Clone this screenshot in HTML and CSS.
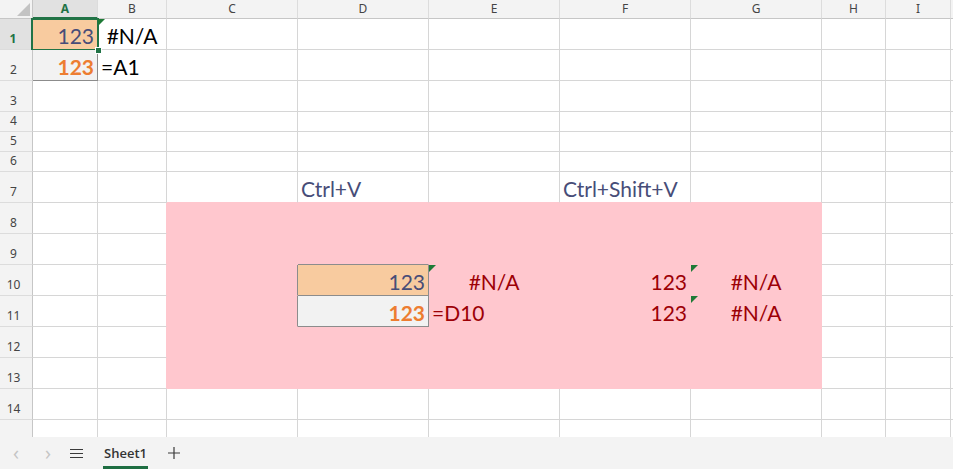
FILE: index.html
```html
<!DOCTYPE html>
<html>
<head>
<meta charset="utf-8">
<link rel="stylesheet" href="styles.css">
</head>
<body>
<div class="app">
  <div class="sheet">
    <!-- header row -->
    <div class="c corner"></div>
    <div class="c hd hd-sel">A</div>
    <div class="c hd">B</div>
    <div class="c hd">C</div>
    <div class="c hd">D</div>
    <div class="c hd">E</div>
    <div class="c hd">F</div>
    <div class="c hd">G</div>
    <div class="c hd">H</div>
    <div class="c hd">I</div>
    <div class="c hd"></div>
    <!-- row 1 -->
    <div class="c rh rh-sel">1</div>
    <div class="c num fill-peach txt-slate bx sel">123</div>
    <div class="c ctr tri">#N/A</div>
    <div class="c"></div><div class="c"></div><div class="c"></div><div class="c"></div><div class="c"></div><div class="c"></div><div class="c"></div><div class="c"></div>
    <!-- row 2 -->
    <div class="c rh">2</div>
    <div class="c num fill-grey txt-orange bx">123</div>
    <div class="c">=A1</div>
    <div class="c"></div><div class="c"></div><div class="c"></div><div class="c"></div><div class="c"></div><div class="c"></div><div class="c"></div><div class="c"></div>
    <!-- row 3 -->
    <div class="c rh">3</div>
    <div class="c"></div><div class="c"></div><div class="c"></div><div class="c"></div><div class="c"></div><div class="c"></div><div class="c"></div><div class="c"></div><div class="c"></div><div class="c"></div>
    <!-- row 4 -->
    <div class="c rh">4</div>
    <div class="c"></div><div class="c"></div><div class="c"></div><div class="c"></div><div class="c"></div><div class="c"></div><div class="c"></div><div class="c"></div><div class="c"></div><div class="c"></div>
    <!-- row 5 -->
    <div class="c rh">5</div>
    <div class="c"></div><div class="c"></div><div class="c"></div><div class="c"></div><div class="c"></div><div class="c"></div><div class="c"></div><div class="c"></div><div class="c"></div><div class="c"></div>
    <!-- row 6 -->
    <div class="c rh">6</div>
    <div class="c"></div><div class="c"></div><div class="c"></div><div class="c"></div><div class="c"></div><div class="c"></div><div class="c"></div><div class="c"></div><div class="c"></div><div class="c"></div>
    <!-- row 7 -->
    <div class="c rh">7</div>
    <div class="c"></div><div class="c"></div>
    <div class="c bb-pink"></div>
    <div class="c bb-pink txt-slate">Ctrl+V</div>
    <div class="c bb-pink"></div>
    <div class="c bb-pink txt-slate">Ctrl+Shift+V</div>
    <div class="c bb-pink"></div>
    <div class="c"></div><div class="c"></div><div class="c"></div>
    <!-- row 8 -->
    <div class="c rh">8</div>
    <div class="c"></div><div class="c br-pink"></div>
    <div class="c pk"></div><div class="c pk"></div><div class="c pk"></div><div class="c pk"></div><div class="c pk"></div>
    <div class="c"></div><div class="c"></div><div class="c"></div>
    <!-- row 9 -->
    <div class="c rh">9</div>
    <div class="c"></div><div class="c br-pink"></div>
    <div class="c pk"></div><div class="c pk bb-dark"></div><div class="c pk"></div><div class="c pk"></div><div class="c pk"></div>
    <div class="c"></div><div class="c"></div><div class="c"></div>
    <!-- row 10 -->
    <div class="c rh">10</div>
    <div class="c"></div><div class="c br-pink"></div>
    <div class="c pk br-dark"></div>
    <div class="c num fill-peach txt-slate bx">123</div>
    <div class="c pk ctr tri">#N/A</div>
    <div class="c pk num">123</div>
    <div class="c pk ctr tri">#N/A</div>
    <div class="c"></div><div class="c"></div><div class="c"></div>
    <!-- row 11 -->
    <div class="c rh">11</div>
    <div class="c"></div><div class="c br-pink"></div>
    <div class="c pk br-dark"></div>
    <div class="c num fill-grey txt-orange bx">123</div>
    <div class="c pk">=D10</div>
    <div class="c pk num">123</div>
    <div class="c pk ctr tri">#N/A</div>
    <div class="c"></div><div class="c"></div><div class="c"></div>
    <!-- row 12 -->
    <div class="c rh">12</div>
    <div class="c"></div><div class="c br-pink"></div>
    <div class="c pk"></div><div class="c pk"></div><div class="c pk"></div><div class="c pk"></div><div class="c pk"></div>
    <div class="c"></div><div class="c"></div><div class="c"></div>
    <!-- row 13 -->
    <div class="c rh">13</div>
    <div class="c"></div><div class="c br-pink"></div>
    <div class="c pk"></div><div class="c pk"></div><div class="c pk"></div><div class="c pk"></div><div class="c pk"></div>
    <div class="c"></div><div class="c"></div><div class="c"></div>
    <!-- row 14 -->
    <div class="c rh">14</div>
    <div class="c"></div><div class="c"></div><div class="c"></div><div class="c"></div><div class="c"></div><div class="c"></div><div class="c"></div><div class="c"></div><div class="c"></div><div class="c"></div>
    <!-- row 15 (cut off by the tab bar) -->
    <div class="c rh"></div>
    <div class="c"></div><div class="c"></div><div class="c"></div><div class="c"></div><div class="c"></div><div class="c"></div><div class="c"></div><div class="c"></div><div class="c"></div><div class="c"></div>
  </div>
  <div class="tabbar">
    <span class="nav">&#8249;</span>
    <span class="nav">&#8250;</span>
    <span class="menu">
      <svg width="13" height="11" viewBox="0 0 13 11"><path d="M0 1.5H13M0 5.5H13M0 9.5H13" stroke="#3a3a3a" stroke-width="1.2" fill="none"/></svg>
    </span>
    <span class="tab">Sheet1</span>
    <span class="plus">
      <svg width="12" height="12" viewBox="0 0 12 12"><path d="M6 0V12M0 6H12" stroke="#3a3a3a" stroke-width="1.2" fill="none"/></svg>
    </span>
  </div>
</div>
</body>
</html>
```
FILE: styles.css
```css
html, body {
  margin: 0;
  padding: 0;
  width: 953px;
  height: 469px;
  overflow: hidden;
  background: #ffffff;
}
.app {
  display: flex;
  flex-direction: column;
  width: 953px;
  height: 469px;
}
.sheet {
  height: 437px;
  overflow: hidden;
  display: grid;
  grid-template-columns: 33px 65px 69px 131px 131px 131px 131px 131px 64px 65px 100px;
  grid-template-rows: 19px 31px 31px 31px 20px 20px 20px 31px 31px 31px 31px 31px 31px 31px 31px 31px;
  flex: none;
}
.c {
  box-sizing: border-box;
  border-right: 1px solid #d6d6d6;
  border-bottom: 1px solid #d6d6d6;
  display: flex;
  align-items: flex-end;
  padding: 0 3px 1px 3px;
  white-space: nowrap;
  font-family: Lato, "Open Sans", sans-serif;
  font-size: 21px;
  line-height: 24px;
  color: #000000;
  position: relative;
}
.corner {
  background: #f3f3f3;
  border-right: 1px solid #c6c6c6;
  border-bottom: 1px solid #c6c6c6;
}
.corner::after {
  content: "";
  position: absolute;
  right: 2px;
  bottom: 2px;
  width: 0;
  height: 0;
  border-left: 13px solid transparent;
  border-bottom: 13px solid #c3c3c3;
}
.hd {
  background: #f3f3f3;
  border-right: 1px solid #dcdcdc;
  border-bottom: 1px solid #c6c6c6;
  justify-content: center;
  align-items: center;
  padding: 0;
  font-family: "Noto Sans", sans-serif;
  font-size: 12px;
  line-height: 16px;
  color: #444444;
}
.hd-sel {
  background: #e1e1e1;
  color: #217346;
  font-weight: 700;
  border-bottom: 2px solid #217346;
}
.rh {
  background: #f3f3f3;
  border-right: 1px solid #c6c6c6;
  border-bottom: 1px solid #dcdcdc;
  justify-content: center;
  padding: 0 5px 2px 0;
  font-family: "Noto Sans", sans-serif;
  font-size: 12px;
  line-height: 16px;
  color: #444444;
}
.rh-sel {
  background: #e1e1e1;
  color: #217346;
  font-weight: 700;
  border-right: 2px solid #217346;
}
.num { justify-content: flex-end; }
.ctr { justify-content: center; }
.fill-peach { background: #f8cb9f; }
.fill-grey { background: #f2f2f2; }
.txt-slate { color: #474d78; }
.txt-orange { color: #ed7d31; font-weight: 700; }
.bx {
  border-right: 1px solid #8c8c8c;
  border-bottom: 1px solid #8c8c8c;
}
.pk {
  background: #ffc7ce;
  border-right-color: #ffc7ce;
  border-bottom-color: #ffc7ce;
  color: #9c0006;
}
.bb-pink { border-bottom-color: #ffc7ce; }
.br-pink { border-right-color: #ffc7ce; }
.bb-dark { border-bottom-color: #8c8c8c; }
.br-dark { border-right-color: #8c8c8c; }
.tri::before {
  content: "";
  position: absolute;
  left: 0;
  top: 0;
  width: 0;
  height: 0;
  border-top: 7px solid #1e7a36;
  border-right: 7px solid transparent;
}
.sel::after {
  content: "";
  position: absolute;
  left: -2px;
  top: -1px;
  right: -2px;
  bottom: -2px;
  border: 2px solid #217346;
}
.sel::before {
  content: "";
  position: absolute;
  right: -5px;
  bottom: -5px;
  width: 5px;
  height: 5px;
  background: #217346;
  border: 1px solid #ffffff;
  z-index: 2;
}
.tabbar {
  flex: 1;
  background: #f3f3f3;
  display: flex;
  align-items: center;
  font-family: "Open Sans", sans-serif;
  position: relative;
}
.nav {
  width: 32px;
  text-align: center;
  font-size: 20px;
  line-height: 20px;
  color: #c4c4c4;
}
.menu {
  display: flex;
  width: 13px;
  margin-left: 6px;
}
.tab {
  margin-left: 20px;
  height: 32px;
  box-sizing: border-box;
  display: flex;
  align-items: center;
  padding: 3px 1px 0 1px;
  font-size: 13px;
  font-weight: 600;
  color: #333333;
  border-bottom: 3px solid #1e6e42;
}
.plus {
  display: flex;
  margin-left: 20px;
}
```
